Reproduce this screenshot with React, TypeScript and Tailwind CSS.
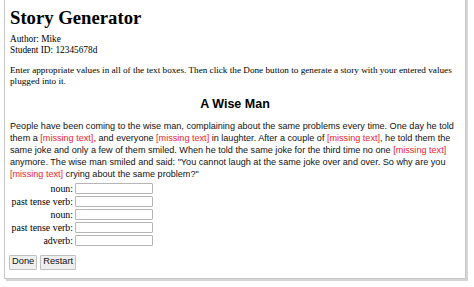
import React from "react";

const M = () => <span className="text-[#e8242f]">[missing text]</span>;

const rows = ["noun", "past tense verb", "noun", "past tense verb", "adverb"];

export default function App() {
  return (
    <div className="w-[474px] h-[287px] bg-white overflow-hidden">
      <div
        className="ml-[4px] mt-[-2px] w-[462px] h-[281px] border border-[#c8c8c8] bg-white px-[5px] shadow-[2px_2px_0_#d4d4d4] text-black"
        style={{ fontFamily: '"Liberation Serif", "Times New Roman", serif' }}
      >
        <h1 className="text-[18.7px] font-bold leading-[1.15] mt-[8px]">Story Generator</h1>
        <div className="text-[9.3px] leading-[11px] mt-[5px]">
          Author: Mike
          <br />
          Student ID: 12345678d
        </div>
        <p className="text-[9.2px] leading-[11px] mt-[9px]">
          Enter appropriate values in all of the text boxes. Then click the Done button to generate a story with your entered values plugged into it.
        </p>
        <div style={{ fontFamily: '"Liberation Sans", Arial, sans-serif' }}>
          <h2 className="text-center font-bold text-[12.5px] leading-[15px] mt-[10px]">A Wise Man</h2>
          <p className="text-[9.1px] leading-[12px] mt-[8px] text-[#111]">
            People have been coming to the wise man, complaining about the same problems every time. One day he told them a <M />, and everyone <M /> in laughter. After a couple of <M />, he told them the same joke and only a few of them smiled. When he told the same joke for the third time no one <M /> anymore. The wise man smiled and said: "You cannot laugh at the same joke over and over. So why are you <M /> crying about the same problem?"
          </p>
        </div>
        <div className="mt-[3px] flex flex-col gap-[2px]">
          {rows.map((r, i) => (
            <div key={i} className="flex items-center h-[11px]">
              <span className="w-[63px] text-right text-[9.9px] leading-[11px] whitespace-nowrap">{r}:</span>
              <span className="ml-[2px] w-[78px] h-[11px] border border-[#b5b5b5] rounded-[1px] bg-white" />
            </div>
          ))}
        </div>
        <div
          className="mt-[9px] ml-[-1px] flex gap-[3px] text-[9.3px]"
          style={{ fontFamily: '"Liberation Sans", Arial, sans-serif' }}
        >
          <button className="h-[15px] px-[2px] bg-[#efefef] border border-[#c0c0c0] rounded-[1px] leading-none text-[#111]">Done</button>
          <button className="h-[15px] px-[2px] bg-[#efefef] border border-[#c0c0c0] rounded-[1px] leading-none text-[#111]">Restart</button>
        </div>
      </div>
    </div>
  );
}
